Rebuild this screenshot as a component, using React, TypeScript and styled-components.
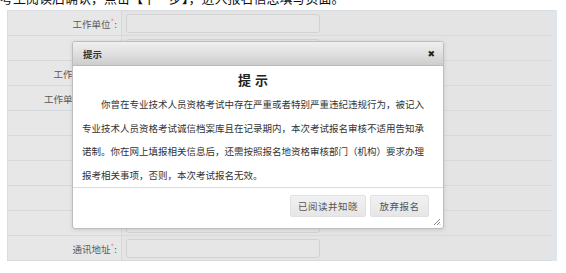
import styled, { createGlobalStyle } from "styled-components";

const GlobalStyle = createGlobalStyle`
  html, body {
    margin: 0;
    padding: 0;
    background: #fff;
    font-family: "Noto Sans CJK SC", "Liberation Sans", sans-serif;
  }
`;

const Page = styled.div`
  position: relative;
  width: 566px;
  height: 273px;
  overflow: hidden;
  background: #fff;
`;

const TopLine = styled.div`
  height: 10px;
  overflow: hidden;
  font-size: 13px;
  line-height: 13px;
  color: #111;
  white-space: nowrap;
  & > span {
    display: block;
    margin-top: -9px;
  }
`;

const FormTable = styled.div`
  margin-left: 7px;
  width: 544px;
  border-left: 1px solid #d8dce0;
  border-right: 5px solid #dfe5ea;
  border-top: 1px solid #d8dce0;
  display: flex;
  flex-direction: column;
`;

const Row = styled.div`
  display: grid;
  grid-template-columns: 114px 1fr;
  height: 24px;
  border-bottom: 1px solid #d6dadf;
`;

const LabelCell = styled.div`
  background: #e7e7e7;
  border-right: 1px solid #d3d8de;
  display: flex;
  align-items: center;
  justify-content: flex-end;
  padding: 2px 4px 0 0;
  font-size: 9.5px;
  color: #5a5a5a;
  white-space: nowrap;
`;

const Star = styled.span`
  color: #e58a8a;
  font-size: 8px;
  position: relative;
  top: -3px;
`;

const ValueCell = styled.div`
  background: #e4e4e4;
  display: flex;
  align-items: center;
  padding-left: 4px;
`;

const InputBox = styled.div`
  width: 192px;
  height: 17px;
  border: 1px solid #d2d2d2;
  border-radius: 3px;
  background: #e6e6e6;
`;

const Dialog = styled.div`
  position: absolute;
  left: 72px;
  top: 41px;
  width: 370px;
  height: 186px;
  border: 1px solid #bdbdbd;
  border-radius: 3px;
  background: #fff;
  box-shadow: 0 1px 4px rgba(0, 0, 0, 0.12);
  display: flex;
  flex-direction: column;
`;

const DialogHeader = styled.div`
  height: 24px;
  border-bottom: 1px solid #bcbcbc;
  border-radius: 2px 2px 0 0;
  background: linear-gradient(180deg, #f0f0f0 0%, #dedede 55%, #cdcdcd 100%);
  display: flex;
  align-items: center;
  justify-content: space-between;
  padding: 0 8px 0 10px;
  font-size: 9.5px;
  font-weight: 700;
  color: #333;
`;

const CloseBtn = styled.span`
  font-size: 9px;
  color: #222;
  font-weight: 700;
  font-family: "DejaVu Sans", sans-serif;
`;

const DialogBody = styled.div`
  flex: 1;
  padding: 4px 15px 0 9px;
  border-bottom: 1px solid #dcdcdc;
`;

const BodyTitle = styled.div`
  text-align: center;
  font-size: 13px;
  font-weight: 700;
  line-height: 18px;
  letter-spacing: 4px;
  color: #222;
  margin: 1px 0 4px;
`;

const Notice = styled.p`
  margin: 0;
  width: 346px;
  font-size: 9.5px;
  line-height: 23.5px;
  text-indent: 2em;
  color: #333;
`;

const DialogFooter = styled.div`
  position: relative;
  height: 41px;
  display: flex;
  justify-content: flex-end;
  align-items: flex-start;
  gap: 4px;
  padding: 7px 14px 0 0;
  box-sizing: border-box;
`;

const FooterButton = styled.button<{ $w: number }>`
  width: ${(p) => p.$w}px;
  height: 22px;
  padding: 0;
  border: 1px solid #e0e0e0;
  border-radius: 2px;
  background: linear-gradient(180deg, #f1f1f1, #e6e6e6);
  font-family: "Noto Sans CJK SC", sans-serif;
  font-size: 9.5px;
  color: #555;
  letter-spacing: 0.5px;
`;

const ResizeGrip = styled.svg`
  position: absolute;
  right: 2px;
  bottom: 2px;
`;

const rows = [
  "工作单位",
  "",
  "工作单位性质",
  "工作单位所在地",
  "",
  "",
  "",
  "",
  "",
  "通讯地址",
];

export default function App() {
  return (
    <Page>
      <GlobalStyle />
      <TopLine>
        <span>考生阅读后确认，点击【下一步】，进入报名信息填写页面。</span>
      </TopLine>
      <FormTable>
        {rows.map((label, i) => (
          <Row key={i}>
            <LabelCell>
              {label && (
                <>
                  {label}
                  <Star>*</Star>:
                </>
              )}
            </LabelCell>
            <ValueCell>
              <InputBox />
            </ValueCell>
          </Row>
        ))}
      </FormTable>

      <Dialog>
        <DialogHeader>
          <span>提示</span>
          <CloseBtn>✖</CloseBtn>
        </DialogHeader>
        <DialogBody>
          <BodyTitle>提示</BodyTitle>
          <Notice>
            你曾在专业技术人员资格考试中存在严重或者特别严重违纪违规行为，被记入专业技术人员资格考试诚信档案库且在记录期内，本次考试报名审核不适用告知承诺制。你在网上填报相关信息后，还需按照报名地资格审核部门（机构）要求办理报考相关事项，否则，本次考试报名无效。
          </Notice>
        </DialogBody>
        <DialogFooter>
          <FooterButton $w={76}>已阅读并知晓</FooterButton>
          <FooterButton $w={59}>放弃报名</FooterButton>
          <ResizeGrip width="9" height="9" viewBox="0 0 9 9">
            <path d="M8 2 L2 8 M8 5 L5 8 M8 7.5 L7.5 8" stroke="#888" strokeWidth="1" />
          </ResizeGrip>
        </DialogFooter>
      </Dialog>
    </Page>
  );
}
